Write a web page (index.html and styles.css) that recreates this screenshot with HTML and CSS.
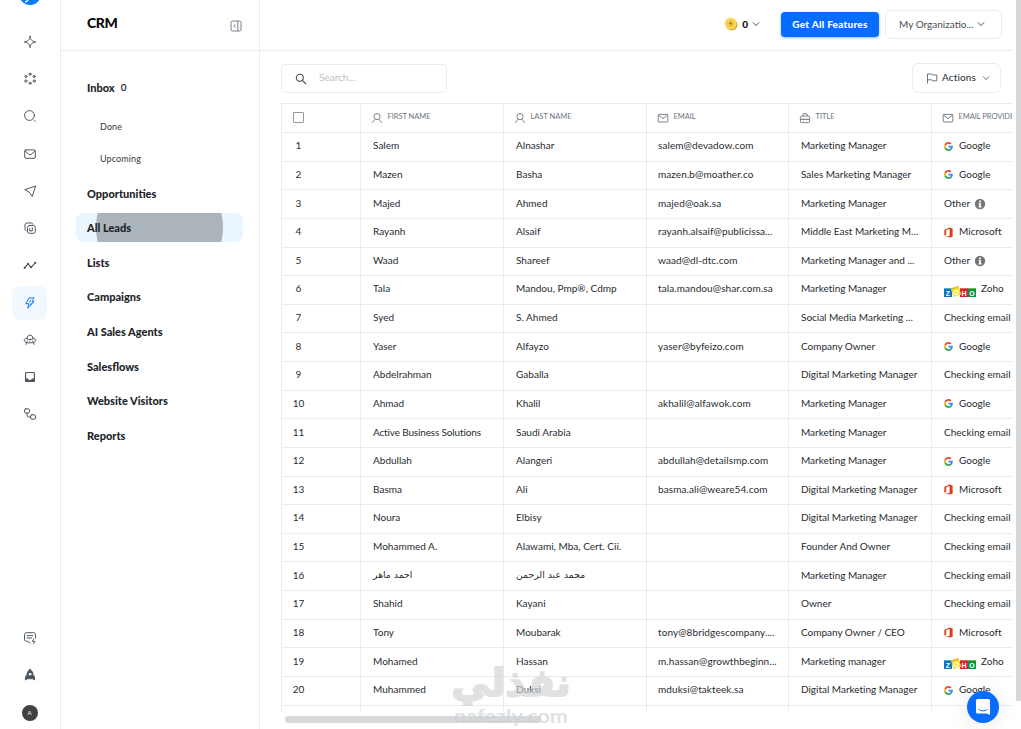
FILE: index.html
```html
<!DOCTYPE html>
<html lang="en">
<head>
  <meta charset="UTF-8">
  <title>CRM - All Leads</title>
  <meta name="viewport" content="width=device-width, initial-scale=1.0">
  <link rel="stylesheet" href="styles.css">
</head>
<body>

  <!-- Shared icons -->
  <svg class="sprite" xmlns="http://www.w3.org/2000/svg">
    <symbol id="person" viewBox="0 0 12 12"><circle cx="6" cy="4.6" r="3.1"/><path d="M1.6 10.8c.5-2 1.5-2.6 2.7-3.2M10.4 10.8c-.5-2-1.5-2.6-2.7-3.2"/></symbol>
    <symbol id="mail" viewBox="0 0 12 12"><rect x="1.2" y="2.4" width="9.6" height="7.6" rx=".8"/><path d="M1.6 3.2 6 6.6l4.4-3.4"/></symbol>
    <symbol id="case" viewBox="0 0 12 12"><rect x="1.4" y="4" width="9.2" height="6.6" rx="1.4"/><path d="M3.8 4V2.6q0-1 1-1h2.4q1 0 1 1V4M1.4 7.4h9.2M4.4 6.6v1.6M7.6 6.6v1.6"/></symbol>
    <symbol id="chevron" viewBox="0 0 10 10"><path d="M2 3.4 5 6.6l3-3.2"/></symbol>
    <symbol id="google" viewBox="0 0 48 48">
      <path fill="#ea4335" d="M24 9.5c3.5 0 6.700 1.200 9.200 3.600l6.900-6.900C35.900 2.400 30.500 0 24 0 14.600 0 6.500 5.400 2.600 13.200l8 6.200C12.400 13.700 17.700 9.500 24 9.500z"/>
      <path fill="#4285f4" d="M47 24.600c0-1.600-.2-3.100-.4-4.600H24v9h12.900c-.6 3-2.300 5.500-4.800 7.200l7.700 6C44.400 38 47 31.800 47 24.600z"/>
      <path fill="#fbbc05" d="M10.500 28.600a14.500 14.500 0 0 1 0-9.200l-8-6.200a24 24 0 0 0 0 21.600z"/>
      <path fill="#34a853" d="M24 48c6.500 0 11.900-2.100 15.900-5.800l-7.700-6c-2.200 1.400-4.900 2.300-8.200 2.300-6.300 0-11.600-4.200-13.500-9.900l-8 6.200C6.500 42.600 14.600 48 24 48z"/>
    </symbol>
    <symbol id="office" viewBox="0 0 12 12"><path fill="#dc3e15" d="M1.500 2.900 7.200.5l3.300 1v9L7.200 11.500l-5.700-2 5.700.6V2.300L3.500 3.200v5.200l-2 1.100z"/></symbol>
    <symbol id="info" viewBox="0 0 12 12"><circle cx="6" cy="6" r="5.200" fill="#747474"/><path fill="#fff" d="M5.200 2.400h1.700V4H5.200zM4.600 4.800h2.300v3.500h.7v1.100H4.500V8.300h.7V5.900h-.6z"/></symbol>
  </svg>

  <div class="app">
    <nav class="rail">
      <div class="logo"><svg viewBox="0 0 22 22"><path d="M6 19c2-.3 3-1 3-3"/></svg></div>
      <a class="rail-item"><svg viewBox="0 0 14 14"><path d="M7 1.300c.6 3.600 1.500 4.800 5.700 5.700C8.500 7.900 7.600 9.100 7 12.700 6.400 9.100 5.500 7.900 1.300 7 5.500 6.100 6.400 4.900 7 1.300z"/></svg></a>
      <a class="rail-item"><svg viewBox="0 0 14 14"><circle cx="7" cy="2.200" r="1.100"/><circle cx="7" cy="11.200" r="1.100"/><circle cx="2.800" cy="4.500" r="1.100"/><circle cx="11.200" cy="4.500" r="1.100"/><circle cx="2.800" cy="9" r="1.100"/><circle cx="11.200" cy="9" r="1.100"/></svg></a>
      <a class="rail-item"><svg viewBox="0 0 14 14"><circle cx="6.500" cy="6.500" r="4.900"/><path d="m11.400 11.400.9.900"/></svg></a>
      <a class="rail-item"><svg viewBox="0 0 14 14"><rect x="1.700" y="2.900" width="10.600" height="8.400" rx="1.200"/><path d="M2.200 4.200 5.800 7.300q1.200.8 2.400 0l3.600-3.100"/></svg></a>
      <a class="rail-item"><svg viewBox="0 0 14 14"><path d="M12.300 2.100 1.700 5.600 6 7.900l3 4.200z"/></svg></a>
      <a class="rail-item"><svg viewBox="0 0 14 14"><rect x="4.500" y="4.500" width="7.800" height="7.800" rx="2"/><path d="M3.300 9.800Q2 9.500 2 8.200V3.900Q2 2 3.900 2h4.400q1.300 0 1.600 1.200M6.700 7.500v2.400h2.600V6.700"/></svg></a>
      <a class="rail-item"><svg viewBox="0 0 14 14" class="bold"><path d="m1.600 9.800 3.400-4 3.100 3.500 4.300-4.600"/><circle cx="1.700" cy="9.800" r=".5"/><circle cx="5" cy="5.900" r=".5"/><circle cx="8.100" cy="9.200" r=".5"/><circle cx="12.300" cy="4.800" r=".5"/></svg></a>
      <a class="rail-item active"><svg viewBox="0 0 14 14"><path d="M6.500 1.900h4.600L9 5.700h2L4.700 12.200l1.200-4.500H3.200z"/><path d="m7.600 4.200-1 1.900M8.700 7 6.800 8.900"/></svg></a>
      <a class="rail-item"><svg viewBox="0 0 14 14"><path d="M4 5.600C4.300 3.400 5.300 2 7 2s2.700 1.400 3 3.600M4 5.300C2 5.600 1.200 6.400 1.200 7.300 1.200 8.900 3.800 9.900 7 9.900s5.800-1 5.800-2.600c0-.9-.8-1.700-2.800-2M4 5.800c1.600 1.100 4.400 1.100 6 0M3.600 9.300 3 11.400M10.400 9.300l.6 2.100M4.200 8h.2M6.900 8h.2M9.600 8h.2"/></svg></a>
      <a class="rail-item"><svg viewBox="0 0 14 14" class="bold"><rect x="2.600" y="2.500" width="8.800" height="8.800" rx=".8"/><path d="M2.600 9.200h2.200l1 1.300h2.400l1-1.300h2.200v2H2.600z" fill="#4c5761"/></svg></a>
      <a class="rail-item"><svg viewBox="0 0 14 14"><rect x="1.600" y="1.800" width="4.800" height="4.300" rx="1.200"/><rect x="7.700" y="7.800" width="4.800" height="4.400" rx="1.200"/><path d="M4 6.200v1.900q0 1.900 1.800 1.900h1.700"/></svg></a>
      <div class="rail-bottom">
        <a class="rail-item"><svg viewBox="0 0 14 14"><path d="M7 12 4.900 10.300H3.500q-2 0-2-2V3.700q0-2 2-2h7q2 0 2 2v3.500M4 4.700h6M4 7h4.500"/><path d="m10.800 8-1.500 2.300h2.600L10.400 12.600"/></svg></a>
        <a class="rail-item"><svg viewBox="0 0 14 14"><path fill="#4c5761" d="M7 1.500c-2 1.300-3 3-3 5.200L2.500 9v3l1.800-1.300h5.400L11.500 12V9L10 6.700C10 4.500 9 2.800 7 1.500z"/><circle cx="7" cy="6.200" r=".9" fill="#fff" stroke="#fff"/></svg></a>
        <div class="avatar">A</div>
      </div>
    </nav>

    <aside class="sidebar">
      <div class="sidebar-head">
        <h1>CRM</h1>
        <svg viewBox="0 0 12 12"><rect x="1" y="1" width="10" height="10" rx="1.500"/><path d="M7.800 1v10M5.200 4.400 3.700 6l1.500 1.600"/></svg>
      </div>
      <ul class="menu">
        <li>Inbox <span class="count">0</span></li>
        <li class="sub">Done</li>
        <li class="sub">Upcoming</li>
        <li>Opportunities</li>
        <li class="selected"><span class="ripple"></span><span class="label">All Leads</span></li>
        <li>Lists</li>
        <li>Campaigns</li>
        <li>AI Sales Agents</li>
        <li>Salesflows</li>
        <li>Website Visitors</li>
        <li>Reports</li>
      </ul>
    </aside>

    <main class="main">
      <header class="topbar">
        <div class="credits">
          <svg class="coin" viewBox="0 0 14 14"><ellipse cx="7.600" cy="7.800" rx="5.900" ry="5.700" fill="#dfa62a"/><circle cx="6.600" cy="6.500" r="5.900" fill="#fbdc5c"/><circle cx="6.600" cy="6.500" r="4.300" fill="#f6cb49"/><path d="M7.700 3.600 4.700 7h1.800l-.6 2.500 2.800-3.400H7z" fill="#a87a28"/></svg>
          <b>0</b>
          <svg class="line-icon"><use href="#chevron"/></svg>
        </div>
        <button class="features-btn">Get All Features</button>
        <button class="org-btn"><span>My Organizatio...</span><svg class="line-icon"><use href="#chevron"/></svg></button>
      </header>

      <div class="toolbar">
        <div class="search">
          <svg viewBox="0 0 12 12"><circle cx="4.800" cy="4.800" r="3.500"/><path d="m7.400 7.400 3.600 3.600"/></svg>
          <span>Search...</span>
        </div>
        <button class="actions-btn"><svg class="flag" viewBox="0 0 12 12"><path d="M1.500 11.500V2h4.300l1 1h4v5.800H6.600l-.9-1H1.500"/></svg><span>Actions</span><svg class="line-icon"><use href="#chevron"/></svg></button>
      </div>

      <div class="table">
        <div class="row head">
          <div><span class="checkbox"></span></div>
          <div><svg><use href="#person"/></svg>FIRST NAME</div>
          <div><svg><use href="#person"/></svg>LAST NAME</div>
          <div><svg><use href="#mail"/></svg>EMAIL</div>
          <div><svg><use href="#case"/></svg>TITLE</div>
          <div><svg><use href="#mail"/></svg>EMAIL PROVIDER</div>
        </div>
        <div class="row"><div>1</div><div>Salem</div><div>Alnashar</div><div>salem@devadow.com</div><div>Marketing Manager</div><div><svg class="brand"><use href="#google"/></svg>Google</div></div>
        <div class="row"><div>2</div><div>Mazen</div><div>Basha</div><div>mazen.b@moather.co</div><div>Sales Marketing Manager</div><div><svg class="brand"><use href="#google"/></svg>Google</div></div>
        <div class="row"><div>3</div><div>Majed</div><div>Ahmed</div><div>majed@oak.sa</div><div>Marketing Manager</div><div>Other<svg class="info"><use href="#info"/></svg></div></div>
        <div class="row"><div>4</div><div>Rayanh</div><div>Alsaif</div><div>rayanh.alsaif@publicissa...</div><div>Middle East Marketing M...</div><div><svg class="brand ms"><use href="#office"/></svg>Microsoft</div></div>
        <div class="row"><div>5</div><div>Waad</div><div>Shareef</div><div>waad@dl-dtc.com</div><div>Marketing Manager and ...</div><div>Other<svg class="info"><use href="#info"/></svg></div></div>
        <div class="row"><div>6</div><div>Tala</div><div>Mandou, Pmp®, Cdmp</div><div>tala.mandou@shar.com.sa</div><div>Marketing Manager</div><div><span class="zoho"><i>Z</i><i>O</i><i>H</i><i>O</i></span>Zoho</div></div>
        <div class="row"><div>7</div><div>Syed</div><div>S. Ahmed</div><div></div><div>Social Media Marketing ...</div><div>Checking email</div></div>
        <div class="row"><div>8</div><div>Yaser</div><div>Alfayzo</div><div>yaser@byfeizo.com</div><div>Company Owner</div><div><svg class="brand"><use href="#google"/></svg>Google</div></div>
        <div class="row"><div>9</div><div>Abdelrahman</div><div>Gaballa</div><div></div><div>Digital Marketing Manager</div><div>Checking email</div></div>
        <div class="row"><div>10</div><div>Ahmad</div><div>Khalil</div><div>akhalil@alfawok.com</div><div>Marketing Manager</div><div><svg class="brand"><use href="#google"/></svg>Google</div></div>
        <div class="row"><div>11</div><div class="tight">Active Business Solutions</div><div>Saudi Arabia</div><div></div><div>Marketing Manager</div><div>Checking email</div></div>
        <div class="row"><div>12</div><div>Abdullah</div><div>Alangeri</div><div>abdullah@detailsmp.com</div><div>Marketing Manager</div><div><svg class="brand"><use href="#google"/></svg>Google</div></div>
        <div class="row"><div>13</div><div>Basma</div><div>Ali</div><div>basma.ali@weare54.com</div><div>Digital Marketing Manager</div><div><svg class="brand ms"><use href="#office"/></svg>Microsoft</div></div>
        <div class="row"><div>14</div><div>Noura</div><div>Elbisy</div><div></div><div>Digital Marketing Manager</div><div>Checking email</div></div>
        <div class="row"><div>15</div><div>Mohammed A.</div><div>Alawami, Mba, Cert. Cii.</div><div></div><div>Founder And Owner</div><div>Checking email</div></div>
        <div class="row"><div>16</div><div class="ar">احمد ماهر</div><div class="ar">محمد عبد الرحمن</div><div></div><div>Marketing Manager</div><div>Checking email</div></div>
        <div class="row"><div>17</div><div>Shahid</div><div>Kayani</div><div></div><div>Owner</div><div>Checking email</div></div>
        <div class="row"><div>18</div><div>Tony</div><div>Moubarak</div><div>tony@8bridgescompany....</div><div>Company Owner / CEO</div><div><svg class="brand ms"><use href="#office"/></svg>Microsoft</div></div>
        <div class="row"><div>19</div><div>Mohamed</div><div>Hassan</div><div>m.hassan@growthbeginn...</div><div>Marketing manager</div><div><span class="zoho"><i>Z</i><i>O</i><i>H</i><i>O</i></span>Zoho</div></div>
        <div class="row"><div>20</div><div>Muhammed</div><div>Duksi</div><div>mduksi@takteek.sa</div><div>Digital Marketing Manager</div><div><svg class="brand"><use href="#google"/></svg>Google</div></div>
        <div class="row stub"><div></div><div></div><div></div><div></div><div></div><div></div></div>
      </div>
      <div class="scroll-x"></div>
    </main>
    <div class="scroll-y"></div>
  </div>

  <svg class="watermark" viewBox="0 0 124 64">
    <text class="wm-ar" x="62" y="32" text-anchor="middle" textLength="119" lengthAdjust="spacingAndGlyphs">نفذلي</text>
    <text class="wm-en" x="5" y="59" textLength="114" lengthAdjust="spacingAndGlyphs">nafezly.com</text>
  </svg>

  <button class="chat"><svg viewBox="0 0 16 18"><path fill="#fff" d="M2.500 1h11Q15 1 15 2.500V17l-3.500-1.500h-9Q1 15.500 1 14V2.500Q1 1 2.500 1z"/><path d="M3.500 11.300q4.500 3.200 9 0" fill="none" stroke="#066dff"/></svg></button>

</body>
</html>
```
FILE: styles.css
```css
* {
  box-sizing: border-box;
}
body {
  font-family: Lato, "DejaVu Sans", sans-serif;
  margin: 0;
  height: 729px;
  overflow: hidden;
  background: #fff;
  color: #272b30;
  font-size: 10px;
}
button {
  font-family: inherit;
  padding: 0;
}
.sprite {
  position: absolute;
  width: 0;
  height: 0;
}
.app {
  display: flex;
  height: 729px;
}

/* Icon rail */
.rail {
  width: 61px;
  border-right: 1px solid #e9ecef;
  display: flex;
  flex-direction: column;
  align-items: center;
  padding-right: 1px;
  flex: none;
}
.logo {
  width: 22px;
  height: 22px;
  border-radius: 50%;
  background: #087cff;
  margin-top: -17px;
  margin-bottom: 18.2px;
  flex: none;
}
.logo svg {
  fill: none;
  stroke: #fff;
  stroke-width: 1.5;
}
.rail-item {
  width: 35px;
  height: 37.25px;
  display: flex;
  align-items: center;
  justify-content: center;
  flex: none;
}
.rail-item svg {
  width: 14px;
  height: 14px;
  fill: none;
  stroke: #4c5761;
  stroke-width: 1;
  stroke-linejoin: round;
  stroke-linecap: round;
}
.rail-item svg.bold {
  stroke-width: 1.2;
}
.rail-item.active {
  background: #f1f9ff;
  border-radius: 8px;
  height: 34px;
  margin: 1.6px 0;
}
.rail-item.active svg {
  stroke: #1976f8;
}
.rail-bottom {
  margin-top: auto;
  display: flex;
  flex-direction: column;
  align-items: center;
  padding-bottom: 8.5px;
}
.avatar {
  width: 16px;
  height: 16px;
  margin-top: 11px;
  border-radius: 50%;
  background: #414141;
  color: #fff;
  font-size: 6px;
  line-height: 16px;
  text-align: center;
}

/* Sidebar */
.sidebar {
  width: 199px;
  border-right: 1px solid #e9ecef;
  flex: none;
}
.sidebar-head {
  height: 51px;
  border-bottom: 1px solid #e9ecef;
  display: flex;
  justify-content: space-between;
  padding: 14px 17px 0 26px;
}
.sidebar-head h1 {
  margin: 0;
  font-size: 14px;
  line-height: 17px;
  font-weight: 900;
  color: #080808;
  letter-spacing: -0.4px;
}
.sidebar-head svg {
  width: 12px;
  height: 12px;
  margin-top: 6px;
  fill: none;
  stroke: #69707a;
  stroke-width: 0.9;
}
.menu {
  list-style: none;
  margin: 0;
  padding: 19px 16px 0 15px;
}
.menu li {
  height: 34.6px;
  padding-left: 11px;
  display: flex;
  align-items: center;
  font-size: 11px;
  font-weight: 900;
  color: #212529;
}
.menu .count {
  margin-left: 6px;
  font-size: 10px;
  font-weight: 600;
}
.menu .sub {
  height: 32px;
  padding-left: 24px;
  font-size: 9px;
  font-weight: 400;
  letter-spacing: 0.1px;
  color: #343a40;
}
.menu li:first-child {
  margin-bottom: 6px;
}
.menu .sub + li:not(.sub) {
  margin-top: 1.2px;
}
.menu .selected {
  position: relative;
  height: 29px;
  margin: 2.8px 0;
  background: #eaf5ff;
  border-radius: 8px;
  overflow: hidden;
}
.ripple {
  position: absolute;
  left: 20px;
  top: -49px;
  width: 127px;
  height: 127px;
  border-radius: 50%;
  background: #abb4bb;
}
.label {
  position: relative;
}

/* Main area */
.main {
  width: 752px;
  overflow: hidden;
  flex: none;
}
.topbar {
  height: 51px;
  border-bottom: 1px solid #e9ecef;
  display: flex;
  justify-content: flex-end;
  align-items: flex-start;
  padding: 10px 10px 0 0;
}
.line-icon {
  width: 10px;
  height: 10px;
  fill: none;
  stroke: #495057;
  stroke-width: 1;
}
.credits {
  display: flex;
  align-items: center;
  height: 28px;
  margin-right: 20px;
}
.credits b {
  margin: 0 3px 1px 4px;
  font-weight: 900;
  color: #111;
}
.coin {
  width: 14px;
  height: 14px;
}
.features-btn {
  width: 98px;
  height: 25px;
  margin: 2px 6px 0 0;
  padding-bottom: 2px;
  border: none;
  border-radius: 4px;
  background: #066dff;
  box-shadow: 0 1px 3px rgba(6, 109, 255, 0.45);
  color: #fff;
  font-size: 10px;
  font-weight: 900;
  letter-spacing: 0.25px;
}
.org-btn {
  display: flex;
  align-items: center;
  width: 117px;
  height: 29px;
  padding: 0 0 2px 13px;
  border: 1px solid #e9ecef;
  border-radius: 6px;
  background: #fff;
  color: #495057;
  font-size: 10px;
}
.org-btn svg {
  margin-left: 2px;
}
.toolbar {
  display: flex;
  justify-content: space-between;
  height: 52px;
  padding: 12px 11px 0 21px;
}
.search {
  display: flex;
  align-items: center;
  width: 166px;
  height: 29px;
  margin-top: 1px;
  padding-left: 13px;
  border: 1px solid #e9ecef;
  border-radius: 5px;
  color: #b9bdc1;
}
.search span {
  margin-bottom: 3px;
}
.search svg {
  width: 12px;
  height: 12px;
  margin-right: 12px;
  fill: none;
  stroke: #495057;
  stroke-width: 1.1;
}
.actions-btn {
  display: flex;
  align-items: center;
  width: 89px;
  height: 30px;
  padding-left: 13px;
  border: 1px solid #e9ecef;
  border-radius: 6px;
  background: #fff;
  color: #343a40;
  font-size: 10px;
  font-weight: 500;
  letter-spacing: 0.1px;
}
.actions-btn span {
  margin-bottom: 2px;
}
.actions-btn .flag {
  width: 12px;
  height: 12px;
  margin-right: 4px;
  fill: none;
  stroke: #495057;
  stroke-width: 0.8;
}
.actions-btn .line-icon {
  margin-left: 5px;
  stroke-width: 0.8;
}

/* Leads table */
.table {
  width: 850px;
  margin-left: 21px;
  border-top: 1px solid #e9ecef;
  border-left: 1px solid #e9ecef;
}
.row {
  display: grid;
  grid-template-columns: 79px 143px 143px 142px 143px 199px;
  height: 28.63px;
  border-bottom: 1px solid #e9ecef;
}
.row div {
  display: flex;
  align-items: center;
  padding: 0 0 3px 12px;
  border-right: 1px solid #e9ecef;
  white-space: nowrap;
  letter-spacing: 0.02px;
}
.row div:nth-child(4) {
  padding-left: 11px;
  letter-spacing: 0.08px;
}
.row div:nth-child(5) {
  letter-spacing: -0.02px;
}
.row div:first-child {
  padding-left: 0;
  padding-right: 45px;
  justify-content: center;
}
.row .tight {
  letter-spacing: -0.15px;
}
.head {
  height: 29px;
}
.row.head div {
  padding: 0 0 3px 9.500px;
  font-size: 7.5px;
  letter-spacing: -0.03px;
  color: #6c757d;
}
.row.head div:first-child {
  padding: 0 45px 2px 0;
}
.head svg {
  width: 12px;
  height: 12px;
  margin: 2px 5px 0 0;
  fill: none;
  stroke: #6c757d;
  stroke-width: 0.9;
}
.checkbox {
  width: 11px;
  height: 11px;
  border: 1px solid #92989e;
  border-radius: 1px;
}
.row .ar {
  font-family: "DejaVu Sans", sans-serif;
  font-size: 9.3px;
  letter-spacing: 0;
}
.brand {
  width: 9px;
  height: 9px;
  margin: 2px 6px 0 0;
}
.brand.ms {
  width: 11px;
  height: 11px;
  margin: 2px 5px 0 -1px;
}
.info {
  width: 12px;
  height: 12px;
  margin: 3px 0 0 4px;
}
.zoho {
  display: flex;
  align-items: flex-end;
  height: 12px;
  margin: 5px 5px 0 0;
}
.zoho i {
  width: 8px;
  height: 9px;
  font: bold 7px/9px "Liberation Sans", sans-serif;
  letter-spacing: 0;
  text-align: center;
  color: #fff;
  background: #0f75bd;
  border-top: 1px solid #45b0df;
}
.zoho i:nth-child(2) {
  background: #f3dc2e;
  border-color: #e9a921;
  transform: translateY(-1px) rotate(-18deg);
}
.zoho i:nth-child(3) {
  background: #d32832;
  border-color: #e5636a;
}
.zoho i:nth-child(4) {
  background: #0b9347;
  border-color: #6bbd50;
}
.row.stub {
  height: 6px;
  border-bottom: none;
}
.scroll-x {
  width: 256px;
  height: 7px;
  margin: 4px 0 0 25px;
  border-radius: 4px;
  background: #d5d9dc;
}
.scroll-y {
  width: 5px;
  height: 701px;
  margin-left: 4px;
  background: #d6d9db;
}

/* Overlays */
.watermark {
  position: absolute;
  left: 449px;
  top: 664px;
  width: 124px;
  height: 64px;
  fill: #d0d2d4;
  opacity: 0.65;
}
.wm-ar {
  font: bold 38px "DejaVu Sans", sans-serif;
  stroke: #d0d2d4;
  stroke-width: 1.8px;
}
.wm-en {
  font: bold 19px Lato, sans-serif;
}
.chat {
  position: absolute;
  left: 967px;
  top: 691px;
  width: 32px;
  height: 32px;
  border: none;
  border-radius: 50%;
  background: #066dff;
  box-shadow: 0 1px 20px rgba(0, 0, 0, 0.1);
  display: flex;
  align-items: center;
  justify-content: center;
}
.chat svg {
  width: 16px;
  height: 18px;
}
```
